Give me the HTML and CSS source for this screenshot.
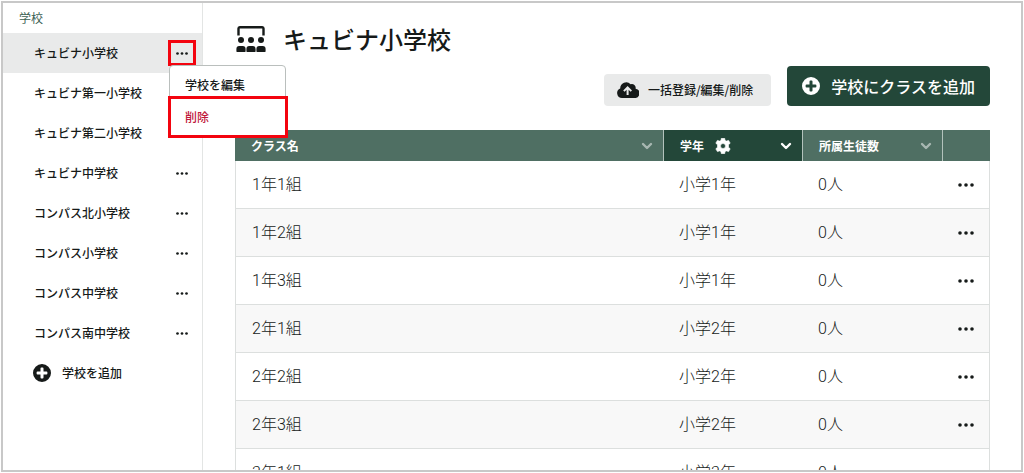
FILE: index.html
```html
<!DOCTYPE html>
<html lang="ja">
<head>
<meta charset="utf-8">
<meta name="viewport" content="width=device-width, initial-scale=1">
<title>キュビナ小学校</title>
<link rel="stylesheet" href="styles.css">
</head>
<body>
<svg class="defs" aria-hidden="true">
  <symbol id="dots" viewBox="0 0 16 4"><circle cx="2" cy="2" r="1.8"/><circle cx="8" cy="2" r="1.8"/><circle cx="14" cy="2" r="1.8"/></symbol>
  <symbol id="plus" viewBox="0 0 18 18"><path fill-rule="evenodd" d="M9 0a9 9 0 1 0 0 18A9 9 0 0 0 9 0zM8.400 3.600h1.200q.9 0 .9.900v3h3q.9 0 .9.900v1.200q0 .9-.9.900h-3v3q0 .9-.9.900H8.400q-.9 0-.9-.9v-3h-3q-.9 0-.9-.9V8.400q0-.9.900-.9h3v-3q0-.9.900-.9z"/></symbol>
  <symbol id="chevron" viewBox="0 0 12 8"><path d="M2 2l4 4 4-4" fill="none" stroke="currentColor" stroke-width="2.400" stroke-linecap="round" stroke-linejoin="round"/></symbol>
  <symbol id="person" viewBox="0 0 10 15"><circle cx="5" cy="3" r="3"/><path d="M1 15q-.6 0-.6-.7V12Q.4 9 3.200 9h3.600q2.800 0 2.800 3v2.300q0 .7-.6.700z"/></symbol>
</svg>
<div class="app">
  <aside class="sidebar">
    <h2 class="sidebar-title">学校</h2>
    <ul class="schools">
      <li class="school is-active"><a href="#">キュビナ小学校</a>
        <button class="more is-marked" aria-label="メニュー" aria-expanded="true"><svg><use href="#dots"/></svg></button>
        <div class="menu">
          <button class="menu-item">学校を編集</button>
          <button class="menu-item is-danger">削除</button>
        </div>
      </li>
      <li class="school"><a href="#">キュビナ第一小学校</a><button class="more" aria-label="メニュー"><svg><use href="#dots"/></svg></button></li>
      <li class="school"><a href="#">キュビナ第二小学校</a><button class="more" aria-label="メニュー"><svg><use href="#dots"/></svg></button></li>
      <li class="school"><a href="#">キュビナ中学校</a><button class="more" aria-label="メニュー"><svg><use href="#dots"/></svg></button></li>
      <li class="school"><a href="#">コンパス北小学校</a><button class="more" aria-label="メニュー"><svg><use href="#dots"/></svg></button></li>
      <li class="school"><a href="#">コンパス小学校</a><button class="more" aria-label="メニュー"><svg><use href="#dots"/></svg></button></li>
      <li class="school"><a href="#">コンパス中学校</a><button class="more" aria-label="メニュー"><svg><use href="#dots"/></svg></button></li>
      <li class="school"><a href="#">コンパス南中学校</a><button class="more" aria-label="メニュー"><svg><use href="#dots"/></svg></button></li>
    </ul>
    <button class="add-school"><svg class="plus"><use href="#plus"/></svg>学校を追加</button>
  </aside>
  <main class="main">
    <header class="heading">
      <svg class="class-icon" viewBox="0 0 30 26" aria-hidden="true">
        <path d="M2.500 9.500V2.500Q2.500 1.200 3.700 1.200h22.600Q27.500 1.200 27.500 2.500V9.500" fill="none" stroke="currentColor" stroke-width="2.400"/>
        <use href="#person" x="0" y="11" width="10" height="15"/><use href="#person" x="10" y="11" width="10" height="15"/><use href="#person" x="20" y="11" width="10" height="15"/>
      </svg>
      <h1>キュビナ小学校</h1>
    </header>
    <div class="actions">
      <button class="btn btn-light">
        <svg class="cloud" viewBox="0 0 22 16" aria-hidden="true"><path fill-rule="evenodd" d="M5 16A5 5 0 0 1 3.200 6.400 6 6 0 0 1 13.600 2.300 3.800 3.800 0 0 1 18.600 6.700 4.700 4.700 0 0 1 17.300 16zM9.600 13h2V7.800l2 2 1.400-1.400L10.600 4 6.200 8.400l1.400 1.400 2-2z"/></svg>一括登録/編集/削除</button>
      <button class="btn btn-primary"><svg class="plus"><use href="#plus"/></svg>学校にクラスを追加</button>
    </div>
    <table class="classes">
      <colgroup><col><col class="col-grade"><col class="col-count"><col class="col-menu"></colgroup>
      <thead><tr>
        <th><div class="th"><span>クラス名</span><svg class="chevron"><use href="#chevron"/></svg></div></th>
        <th class="is-sorted"><div class="th"><span>学年</span><svg class="gear" viewBox="0 0 16 16" aria-hidden="true"><path fill-rule="evenodd" d="M6.400.2h3.200l.5 2.200 1.300.7 2.200-.7 1.600 2.800-1.700 1.500v2.600l1.700 1.500-1.600 2.800-2.200-.7-1.300.7-.5 2.200H6.400l-.5-2.200-1.300-.7-2.200.7-1.600-2.800 1.700-1.500V6.700L.8 5.200l1.600-2.800 2.200.7 1.300-.7zM8 5.500a2.500 2.500 0 1 0 0 5 2.500 2.500 0 0 0 0-5z" stroke="currentColor" stroke-width=".6" stroke-linejoin="round"/></svg><svg class="chevron"><use href="#chevron"/></svg></div></th>
        <th><div class="th"><span>所属生徒数</span><svg class="chevron"><use href="#chevron"/></svg></div></th>
        <th aria-label="操作"></th>
      </tr></thead>
      <tbody>
        <tr><td>1年1組</td><td>小学1年</td><td>0人</td><td><button class="row-more" aria-label="メニュー"><svg><use href="#dots"/></svg></button></td></tr>
        <tr><td>1年2組</td><td>小学1年</td><td>0人</td><td><button class="row-more" aria-label="メニュー"><svg><use href="#dots"/></svg></button></td></tr>
        <tr><td>1年3組</td><td>小学1年</td><td>0人</td><td><button class="row-more" aria-label="メニュー"><svg><use href="#dots"/></svg></button></td></tr>
        <tr><td>2年1組</td><td>小学2年</td><td>0人</td><td><button class="row-more" aria-label="メニュー"><svg><use href="#dots"/></svg></button></td></tr>
        <tr><td>2年2組</td><td>小学2年</td><td>0人</td><td><button class="row-more" aria-label="メニュー"><svg><use href="#dots"/></svg></button></td></tr>
        <tr><td>2年3組</td><td>小学2年</td><td>0人</td><td><button class="row-more" aria-label="メニュー"><svg><use href="#dots"/></svg></button></td></tr>
        <tr><td>3年1組</td><td>小学3年</td><td>0人</td><td><button class="row-more" aria-label="メニュー"><svg><use href="#dots"/></svg></button></td></tr>
      </tbody>
    </table>
  </main>
</div>
</body>
</html>
```
FILE: styles.css
```css
* { box-sizing: border-box; }

body {
  margin: 0;
  padding: 1px;
  color: #161a19;
  background: #fff;
  font: 500 12px/16px "Noto Sans CJK JP", sans-serif;
}

svg { display: block; flex: none; fill: currentColor; }
.defs { position: absolute; width: 0; height: 0; }

button {
  margin: 0;
  padding: 0;
  border: 0;
  color: inherit;
  background: none;
  font: inherit;
  cursor: pointer;
}

.app {
  display: flex;
  height: calc(100vh - 2px);
  border: 2px solid #c8c8c8;
  overflow: hidden;
}

/* Sidebar */
.sidebar {
  flex: none;
  width: 200px;
  border-right: 1px solid #e3e5e4;
}

.sidebar-title {
  margin: 0;
  padding: 7px 16px;
  color: #3c6153;
  font-size: 12px;
  font-weight: 400;
}

.schools { margin: 0; padding: 0; list-style: none; }

.school {
  position: relative;
  display: flex;
  align-items: center;
  justify-content: space-between;
  height: 40px;
  padding: 0 6px 0 31px;
}

.school.is-active { background: #e9eaea; }
.school a { color: inherit; text-decoration: none; }

.more {
  display: grid;
  place-items: center;
  width: 28px;
  height: 26px;
}

.more svg { width: 12px; height: 3px; }
.more.is-marked { border: 3px solid #f3040f; }

.menu {
  position: absolute;
  z-index: 2;
  top: 32px;
  left: 166px;
  width: 117px;
  border: 1px solid #babfbd;
  border-radius: 4px;
  background: #fff;
}

.menu-item {
  display: block;
  width: 100%;
  height: 32px;
  padding: 6px 15px 0;
  text-align: left;
}

.menu-item.is-danger {
  width: 120px;
  height: 42px;
  margin: -2px;
  padding: 0 14px;
  border: 3px solid #f3040f;
  color: #bf183c;
  background: #fff;
}

.add-school {
  display: flex;
  align-items: center;
  gap: 11px;
  height: 40px;
  padding: 0 30px;
}

.plus { width: 18px; height: 18px; }

/* Main */
.main { flex: 1; min-width: 0; padding: 20px 31px 0 32px; }

.heading { display: flex; align-items: center; gap: 17px; height: 32px; }
.heading h1 { margin: 0; font-size: 24px; line-height: 32px; font-weight: 500; }
.class-icon { width: 30px; height: 26px; margin-left: 1px; }

.actions {
  display: flex;
  align-items: flex-end;
  justify-content: flex-end;
  gap: 16px;
  padding: 11px 0 24px;
}

.btn { display: flex; align-items: center; border-radius: 4px; }

.btn-light {
  gap: 9px;
  height: 32px;
  padding: 0 18px 0 13px;
  background: #e9eaea;
}

.btn-primary {
  gap: 11px;
  height: 40px;
  padding: 0 15px;
  color: #fff;
  background: #234739;
  font-size: 16px;
}

.cloud { width: 22px; height: 16px; }

/* Class table */
.classes {
  width: 100%;
  border-collapse: separate;
  border-spacing: 0;
  table-layout: fixed;
}

.col-grade { width: 139px; }
.col-count { width: 140px; }
.col-menu { width: 47px; }

.classes th {
  height: 31px;
  padding: 0 10px 0 16px;
  border-right: 1px solid #b3c2bc;
  color: #fff;
  background: #4f6f63;
  font-weight: 700;
  text-align: left;
}

.classes th:last-child { border-right: 0; }
.classes th.is-sorted { background: #234739; }
.th { display: flex; align-items: center; gap: 11px; }
.chevron { width: 12px; height: 8px; margin-left: auto; opacity: .5; }
.is-sorted .chevron { opacity: 1; }
.gear { width: 16px; height: 16px; }

.classes td {
  height: 48px;
  padding: 0 15px;
  border-bottom: 1px solid #dcdfde;
  font: 300 16px/24px Roboto, "Noto Sans CJK JP", sans-serif;
}

.classes td:first-child { padding-left: 16px; border-left: 1px solid #dcdfde; }
.classes td:last-child { padding: 0; border-right: 1px solid #dcdfde; }
.classes tbody tr:nth-child(even) { background: #f8f8f8; }

.row-more { display: grid; place-items: center; width: 100%; height: 40px; }
.row-more svg { width: 16px; height: 4px; }
```
